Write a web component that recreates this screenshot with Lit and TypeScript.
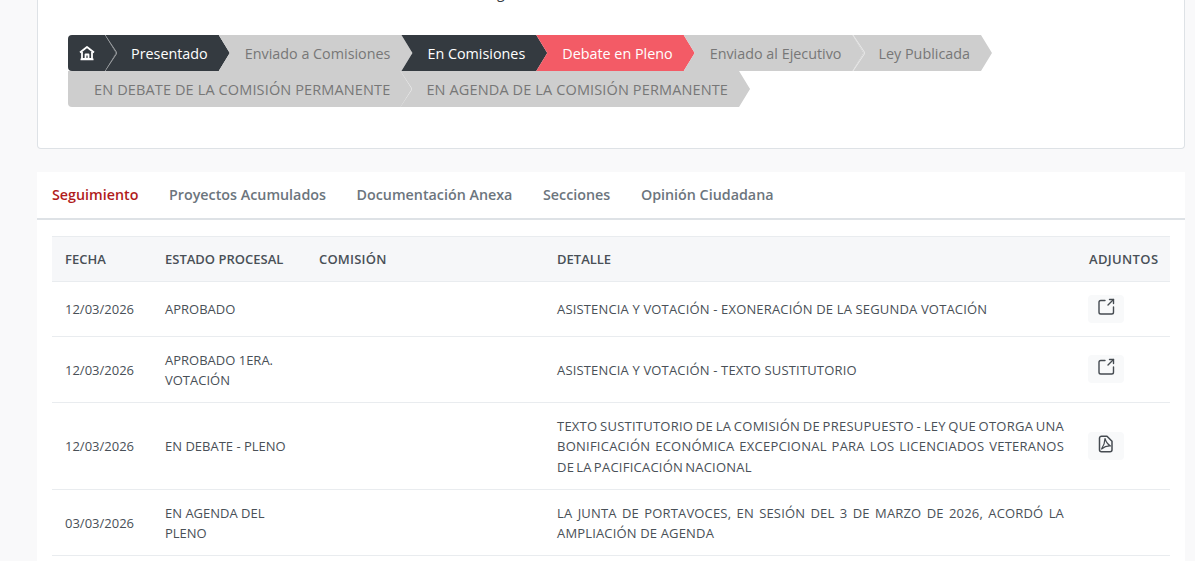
import { LitElement, html, css, svg } from "lit";
import { customElement } from "lit/decorators.js";

const external = html`<svg width="18" height="18" viewBox="0 0 18 18" fill="none" stroke="currentColor" stroke-width="1.4" stroke-linecap="round" stroke-linejoin="round"><path d="M8 2.500H3.800a1.800 1.800 0 0 0-1.800 1.800v9.900a1.800 1.800 0 0 0 1.800 1.800h10.900a1.800 1.800 0 0 0 1.800-1.800V9"/><path d="M12.500 1.500H16.500V5.500"/><path d="M16.500 1.500 11 7"/></svg>`;
const pdf = html`<svg width="16" height="18" viewBox="0 0 16 18" fill="none" stroke="currentColor" stroke-width="1.500" stroke-linejoin="round"><path d="M3.500 1.200h5.500l5 5v8.600a2 2 0 0 1-2 2h-8.500a2 2 0 0 1-2-2v-11.600a2 2 0 0 1 2-2z"/><path d="M7 3.500c0 3.500-1.200 7-3.500 10.500 3-2.500 6-3.200 9-3-2.500-1.500-4.500-4-5.500-7.500z" stroke-width="1.200"/></svg>`;
const home = html`<svg width="16" height="16" viewBox="0 0 16 16" fill="none" stroke="#fff" stroke-width="1.800" stroke-linejoin="round"><path d="M1 7.500 8 2l7 5.500"/><path d="M3 7v7h10V7"/><path d="M1.500 14.300h13"/><path d="M6.500 14V9.500h3V14"/></svg>`;
const chev = svg`<path d="M0 0 L12 18 L0 36" fill="none" stroke="#fff" stroke-opacity=".55" stroke-width="1"/>`;

interface Row { date: string; state: string; detail: string; icon?: "ext" | "pdf"; tight?: boolean; }
const rows: Row[] = [
  { date: "12/03/2026", state: "APROBADO", detail: "ASISTENCIA Y VOTACIÓN - EXONERACIÓN DE LA SEGUNDA VOTACIÓN", icon: "ext" },
  { date: "12/03/2026", state: "APROBADO 1ERA. VOTACIÓN", detail: "ASISTENCIA Y VOTACIÓN - TEXTO SUSTITUTORIO", icon: "ext" },
  { date: "12/03/2026", state: "EN DEBATE - PLENO", detail: "TEXTO SUSTITUTORIO DE LA COMISIÓN DE PRESUPUESTO - LEY QUE OTORGA UNA BONIFICACIÓN ECONÓMICA EXCEPCIONAL PARA LOS LICENCIADOS VETERANOS DE LA PACIFICACIÓN NACIONAL", icon: "pdf", tight: true },
  { date: "03/03/2026", state: "EN AGENDA DEL PLENO", detail: "LA JUNTA DE PORTAVOCES, EN SESIÓN DEL 3 DE MARZO DE 2026, ACORDÓ LA AMPLIACIÓN DE AGENDA" },
];

@customElement("app-root")
export class AppRoot extends LitElement {
  static styles = css`
    :host { display: block; height: 561px; overflow: hidden; background: #f9f9fa; color: #495057; font-family: "Open Sans", "Noto Sans", sans-serif; font-size: 13px; }
    .page { padding: 0 10px 0 37px; }
    .card { background: #fff; border: 1px solid #dee2e6; border-top: none; border-radius: 0 0 4px 4px; padding: 0 30px 41px; }
    .cut { height: 3px; overflow: hidden; margin-bottom: 32px; padding-left: 429px; font-size: 14px; line-height: 14px; color: #343a40; }
    .cut span { display: block; margin-top: -14px; }
    .steps { display: flex; flex-wrap: wrap; }
    .step { position: relative; height: 36px; box-sizing: border-box; display: flex; align-items: center; padding: 0 22px 0 26px; margin-right: -11px; font-size: 14.350px; white-space: nowrap; clip-path: polygon(0 0, calc(100% - 11px) 0, 100% 50%, calc(100% - 11px) 100%, 0 100%, 11px 50%); }
    .step.first { clip-path: polygon(0 0, calc(100% - 11px) 0, 100% 50%, calc(100% - 11px) 100%, 0 100%); }
    .home { padding: 0 21px 0 11px; border-radius: 4px 0 0 4px; }
    .grey { background: #cecece; color: #777; }
    .dark { background: #343a40; color: #fff; }
    .red { background: #f35b66; color: #fff; }
    .first.grey { border-radius: 0 0 0 4px; }
    .upper { font-size: 14.500px; letter-spacing: .13px; }
    .first.upper { margin-right: -12px; }
    .sep { position: absolute; left: 0; top: 0; }
    .break { flex-basis: 100%; height: 0; }
    .tabs-card { margin-top: 23px; background: #fff; padding: 0 15px; height: 420px; }
    .tabs { display: flex; gap: 30.600px; height: 45px; padding: 0 15px 1px; align-items: center; border-bottom: 2px solid #dee2e6; margin: 0 -15px 16px; font-size: 14.300px; font-weight: 600; color: #6c757d; }
    .tabs .on { color: #b01c1c; }
    table { width: 1118px; border-collapse: collapse; table-layout: fixed; line-height: 20.500px; }
    th { text-align: left; background: #f6f7f9; font-weight: 600; padding: 12px 13px 11px; border-top: 1px solid #e9ecef; border-bottom: 1px solid #e9ecef; color: #495057; }
    th.com { letter-spacing: .2px; }
    th.adj { padding: 12px 0 11px 12px; letter-spacing: .35px; }
    td { padding: 13px 13px 11px; border-bottom: 1px solid #e9ecef; vertical-align: middle; }
    td.d { text-align: justify; letter-spacing: .16px; line-height: 20.700px; }
    td.d.tight { letter-spacing: .24px; word-spacing: -1.500px; }
    td.a { padding: 12px 13px; }
    .btn { width: 36px; height: 28px; box-sizing: border-box; margin: 1px 0 1px -2px; padding-bottom: 4px; background: #f8f9fa; border-radius: 4px; display: flex; align-items: center; justify-content: center; color: #454b51; }
  `;

  step(label: unknown, cls: string, sep = false) {
    return html`<div class="step ${cls}">${sep ? html`<svg class="sep" width="12" height="36">${chev}</svg>` : ""}${label}</div>`;
  }

  render() {
    return html`<div class="page">
      <section class="card">
        <div class="cut"><span>g</span></div>
        <div class="steps">
          ${this.step(home, "dark first home")}
          ${this.step("Presentado", "dark", true)}
          ${this.step("Enviado a Comisiones", "grey")}
          ${this.step("En Comisiones", "dark")}
          ${this.step("Debate en Pleno", "red")}
          ${this.step("Enviado al Ejecutivo", "grey")}
          ${this.step("Ley Publicada", "grey", true)}
          <div class="break"></div>
          ${this.step("EN DEBATE DE LA COMISIÓN PERMANENTE", "grey first upper")}
          ${this.step("EN AGENDA DE LA COMISIÓN PERMANENTE", "grey upper", true)}
        </div>
      </section>
      <section class="tabs-card">
        <nav class="tabs">
          <span class="on">Seguimiento</span><span>Proyectos Acumulados</span><span>Documentación Anexa</span><span>Secciones</span><span>Opinión Ciudadana</span>
        </nav>
        <table>
          <colgroup><col style="width:100px"/><col style="width:154px"/><col style="width:238px"/><col style="width:533px"/><col style="width:93px"/></colgroup>
          <thead><tr><th>FECHA</th><th>ESTADO PROCESAL</th><th class="com">COMISIÓN</th><th>DETALLE</th><th class="adj">ADJUNTOS</th></tr></thead>
          <tbody>
            ${rows.map(r => html`<tr>
              <td>${r.date}</td><td>${r.state}</td><td></td><td class="d ${r.tight ? "tight" : ""}">${r.detail}</td>
              <td class="a">${r.icon ? html`<div class="btn">${r.icon === "ext" ? external : pdf}</div>` : ""}</td>
            </tr>`)}
          </tbody>
        </table>
      </section>
    </div>`;
  }
}
